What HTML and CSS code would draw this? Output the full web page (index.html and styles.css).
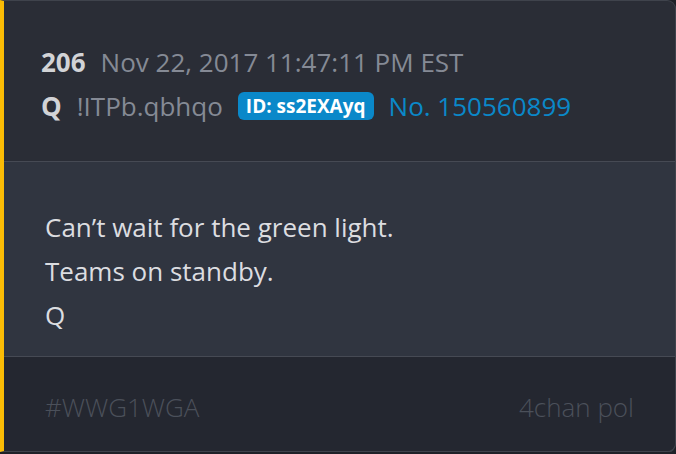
FILE: index.html
```html
<!DOCTYPE html>
<html lang="en">
    <head>
        <meta charset="UTF-8" />
        <meta name="viewport" content="width=device-width, initial-scale=1.0" />
        <title>Post 206</title>
        <link rel="stylesheet" href="styles.css">
    </head>
    <body>
        <div class="post-card">
            <div class="post-header">
                <div class="meta-row">
                    <span class="post-count">206</span>
                    <span class="post-date">Nov 22, 2017 11:47:11 PM EST</span>
                </div>
                <div class="meta-row">
                    <span class="post-name">Q</span>
                    <span class="post-trip">!ITPb.qbhqo</span>
                    <span class="post-id">ID: ss2EXAyq</span>
                    <span class="post-no">No. 150560899</span>
                </div>
            </div>
            <div class="post-body">
                <p>Can’t wait for the green light.</p>
                <p>Teams on standby.</p>
                <p>Q</p>
            </div>
            <div class="post-footer">
                <span>#WWG1WGA</span>
                <span>4chan pol</span>
            </div>
        </div>
    </body>
</html>
```

FILE: styles.css
```css
* {
    box-sizing: border-box;
}

body {
    margin: 0;
    background: #1e2128;
    font-family: "Open Sans", sans-serif;
}

.post-card {
    width: 676px;
    height: 452px;
    display: flex;
    flex-direction: column;
    background: #2a2d36;
    border: 1px solid #3f434c;
    border-left: 4px solid #fbbc05;
    border-radius: 0 9px 9px 0;
    box-shadow: 0 1px 0 #3a3e47;
    overflow: hidden;
}

.post-header {
    height: 161px;
    padding: 42px 0 0 37px;
    border-bottom: 1px solid #464a54;
    display: flex;
    flex-direction: column;
    gap: 6px;
}

.meta-row {
    display: flex;
    align-items: center;
    gap: 15px;
    font-size: 26px;
    line-height: 38px;
}

.post-count,
.post-name {
    font-weight: 700;
    color: #d2d3d6;
}

.post-date,
.post-trip {
    color: #858a95;
}

.post-id {
    background: #0a88c9;
    color: #fff;
    font-weight: 700;
    font-size: 19px;
    line-height: 28px;
    padding: 0 8px;
    border-radius: 6px;
}

.post-no {
    color: #0a88c9;
}

.post-body {
    height: 195px;
    background: #303540;
    border-bottom: 1px solid #464a54;
    padding: 43px 0 0 41px;
    color: #dcdde0;
    font-size: 26px;
    line-height: 44px;
}

.post-body p {
    margin: 0;
}

.post-footer {
    flex: 1;
    background: #242730;
    display: flex;
    justify-content: space-between;
    align-items: center;
    padding: 6px 41px 0 41px;
    font-size: 26px;
    font-weight: 300;
    color: #4b505a;
}
```
